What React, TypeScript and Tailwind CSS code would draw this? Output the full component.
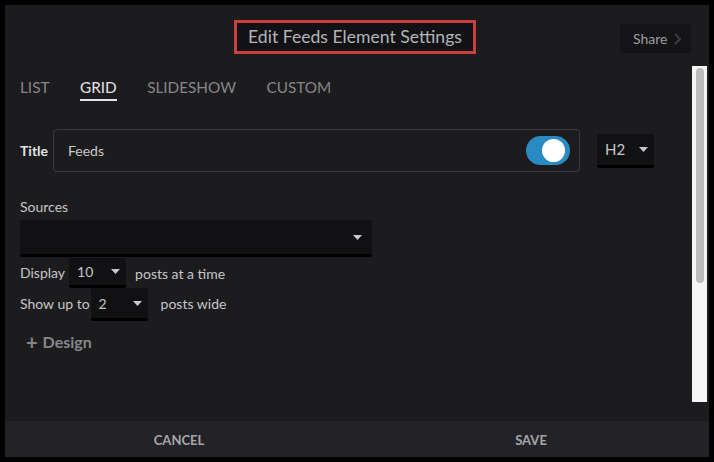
import React from 'react';

const font = { fontFamily: 'Lato, "Open Sans", sans-serif' };

function Caret() {
  return (
    <svg width="9" height="5" viewBox="0 0 9 5" className="shrink-0">
      <path d="M0 0 H9 L4.5 5 Z" fill="#c9c9cc" />
    </svg>
  );
}

function Select({ value, className }: { value: string; className: string }) {
  return (
    <div
      className={`flex items-center justify-between bg-[#111113] border-b-[3px] border-black rounded-[2px] pl-[8px] pr-[6px] text-[14px] text-[#c6c6c9] ${className}`}
    >
      <span>{value}</span>
      <Caret />
    </div>
  );
}

export default function App() {
  const tabs = ['LIST', 'GRID', 'SLIDESHOW', 'CUSTOM'];
  return (
    <div className="w-[714px] h-[462px] bg-black p-[5px]" style={font}>
      <div className="w-full h-full flex flex-col bg-[#1c1c1f]">
        {/* header */}
        <div className="relative h-[61px] shrink-0 flex items-start justify-center pt-[15px]">
          <div className="h-[34px] px-[11px] flex items-center border-[3px] border-[#c8413b] bg-[#121214] text-[17.6px] text-[#b2b4b9] ml-[-4px]">
            Edit Feeds Element Settings
          </div>
          <div className="absolute right-[18px] top-[19px] w-[71px] h-[29px] rounded-[3px] bg-[#141416] flex items-center pl-[13px] gap-[7px] text-[14px] text-[#9c9ca0]">
            <span>Share</span>
            <svg width="7" height="12" viewBox="0 0 7 12">
              <path d="M1 1 L6 6 L1 11" stroke="#3b3b3f" strokeWidth="2" fill="none" />
            </svg>
          </div>
        </div>

        {/* body */}
        <div className="flex-1 flex min-h-0">
          <div className="flex-1 pl-[15px]">
            <div className="flex gap-[30.5px] mt-[11px] text-[15.3px] leading-[20px]">
              {tabs.map((t) => (
                <span
                  key={t}
                  className={
                    t === 'GRID'
                      ? 'text-[#e4e4e6] pb-[2px] border-b-2 border-[#e4e4e6]'
                      : 'text-[#86868a] pb-[2px] border-b-2 border-transparent'
                  }
                >
                  {t}
                </span>
              ))}
            </div>

            <div className="flex items-center mt-[28px] h-[43px]">
              <span className="w-[33px] text-[14px] font-bold text-[#e2e2e4]">Title</span>
              <div className="w-[527px] h-[43px] border border-[#3a3a3d] rounded-[4px] flex items-center justify-between pl-[14px] pr-[9px]">
                <span className="text-[14px] text-[#c9c9cc]">Feeds</span>
                <div className="w-[44px] h-[29px] rounded-full bg-[#2a8bc2] flex items-center justify-end pr-[5px]">
                  <div className="w-[23px] h-[23px] rounded-full bg-white" />
                </div>
              </div>
              <Select value="H2" className="ml-[17px] w-[57px] h-[34px] text-[15px] pr-[5px]" />
            </div>

            <div className="mt-[25px] text-[14px] leading-[20px] text-[#c6c6c9]">Sources</div>
            <div className="mt-[3px] w-[352px] h-[37px] bg-[#111113] border-b-[3px] border-black rounded-[2px] flex items-center justify-end pr-[10px]">
              <Caret />
            </div>

            <div className="flex items-center h-[30px] mt-[1px] text-[14px] text-[#c6c6c9]">
              <span className="mt-[-2px]">Display</span>
              <Select value="10" className="ml-[4px] w-[57px] h-[30px]" />
              <span className="ml-[9px]">posts at a time</span>
            </div>
            <div className="flex items-center h-[33px] text-[14px] text-[#c6c6c9]">
              <span className="mt-[-3px]">Show up to</span>
              <Select value="2" className="ml-[1px] w-[57px] h-[33px]" />
              <span className="ml-[13px] mt-[-3px]">posts wide</span>
            </div>

            <div className="flex items-center mt-[9px] ml-[6px] text-[16px] font-bold text-[#86868a]">
              <span className="text-[20px] leading-[20px] mr-[5px]">+</span>
              <span>Design</span>
            </div>
          </div>

          {/* scrollbar */}
          <div className="w-[15px] mr-[2px] mb-[19px] bg-[#f5f5f5] flex justify-center pt-[2px]">
            <div className="w-[8px] h-[215px] rounded-full bg-[#bcbcbc]" />
          </div>
        </div>

        {/* footer */}
        <div className="h-[36px] shrink-0 flex bg-[#232327] pt-[3px] text-[13px] font-bold text-[#a6a6a9]">
          <button className="flex-1 flex items-center justify-center pr-[4px]">CANCEL</button>
          <button className="flex-1 flex items-center justify-center pr-[4px]">SAVE</button>
        </div>
      </div>
    </div>
  );
}
